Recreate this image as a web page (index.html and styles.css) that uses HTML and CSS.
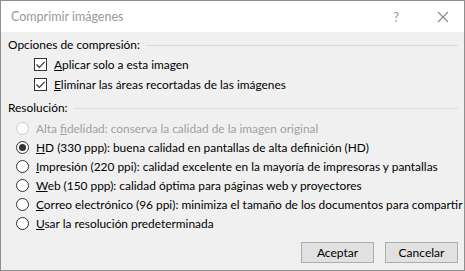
FILE: index.html
```html
<!DOCTYPE html>
<html lang="es">
<head>
    <meta charset="UTF-8">
    <title>Comprimir imágenes</title>
    <link rel="stylesheet" href="styles.css">
</head>
<body>
    <div class="dialog">
        <div class="titlebar">
            <span class="title">Comprimir imágenes</span>
            <span class="help">?</span>
            <svg class="close" width="12" height="12" viewBox="0 0 12 12">
                <path d="M1 1 L11 11 M11 1 L1 11" stroke="#8a8a8a" stroke-width="1.1" fill="none"/>
            </svg>
        </div>
        <div class="content">
            <div class="group-head">
                <span>Opciones de compresión:</span>
                <div class="rule"></div>
            </div>
            <div class="checks">
                <label class="row check-row">
                    <span class="box">
                        <svg width="11" height="11" viewBox="0 0 11 11"><path d="M1.5 5.5 L4.3 8.3 L9.7 2.8" stroke="#333" stroke-width="1.2" fill="none"/></svg>
                    </span>
                    <span><u>A</u>plicar solo a esta imagen</span>
                </label>
                <label class="row check-row">
                    <span class="box">
                        <svg width="11" height="11" viewBox="0 0 11 11"><path d="M1.5 5.5 L4.3 8.3 L9.7 2.8" stroke="#333" stroke-width="1.2" fill="none"/></svg>
                    </span>
                    <span><u>E</u>liminar las áreas recortadas de las imágenes</span>
                </label>
            </div>

            <div class="group-head res-head">
                <span>Resolución:</span>
                <div class="rule"></div>
            </div>
            <div class="radios">
                <label class="row radio-row disabled">
                    <span class="radio"></span>
                    <span>Alta <u>f</u>idelidad: conserva la calidad de la imagen original</span>
                </label>
                <label class="row radio-row">
                    <span class="radio on"></span>
                    <span><u>H</u>D (330 ppp): buena calidad en pantallas de alta definición (HD)</span>
                </label>
                <label class="row radio-row">
                    <span class="radio"></span>
                    <span><u>I</u>mpresión (220 ppi): calidad excelente en la mayoría de impresoras y pantallas</span>
                </label>
                <label class="row radio-row">
                    <span class="radio"></span>
                    <span><u>W</u>eb (150 ppp): calidad óptima para páginas web y proyectores</span>
                </label>
                <label class="row radio-row">
                    <span class="radio"></span>
                    <span><u>C</u>orreo electrónico (96 ppi): minimiza el tamaño de los documentos para compartir</span>
                </label>
                <label class="row radio-row">
                    <span class="radio"></span>
                    <span><u>U</u>sar la resolución predeterminada</span>
                </label>
            </div>

            <div class="buttons">
                <button class="btn">Aceptar</button>
                <button class="btn">Cancelar</button>
            </div>
        </div>
    </div>
</body>
</html>
```

FILE: styles.css
```css
html, body {
    margin: 0;
    padding: 0;
}
body {
    font-family: Lato, 'Noto Sans', sans-serif;
    font-size: 11.9px;
    color: #000;
    background: #f0f0f0;
}
.dialog {
    width: 463px;
    height: 269px;
    border: 1px solid #8f8f8f;
    background: #f0f0f0;
    display: flex;
    flex-direction: column;
    overflow: hidden;
}
.titlebar {
    height: 31px;
    background: #fff;
    display: flex;
    align-items: center;
    padding-left: 10px;
    padding-right: 15px;
}
.title {
    flex: 1;
    color: #999;
    font-size: 12.5px;
    padding-bottom: 1px;
}
.help {
    color: #999;
    font-size: 13px;
    margin-right: 38px;
}
.content {
    flex: 1;
    padding: 4px 6px 0 7px;
    display: flex;
    flex-direction: column;
}
.group-head {
    display: flex;
    align-items: center;
    height: 17px;
}
.group-head .rule {
    flex: 1;
    height: 1px;
    background: #dcdcdc;
    margin-left: 6px;
    margin-top: 1px;
}
.res-head {
    margin-top: 5px;
}
.row {
    display: flex;
    align-items: center;
    white-space: nowrap;
}
.checks {
    padding-left: 26px;
    padding-top: 1px;
}
.check-row {
    height: 20px;
}
.box {
    flex-shrink: 0;
    width: 11px;
    height: 11px;
    border: 1px solid #333;
    background: #fff;
    margin-right: 7px;
    display: flex;
}
.radios {
    padding-left: 8px;
    padding-top: 3px;
}
.radio-row {
    height: 19px;
}
.radio {
    flex-shrink: 0;
    width: 11px;
    height: 11px;
    border: 1px solid #333;
    border-radius: 50%;
    background: #fff;
    margin-right: 7px;
    display: flex;
    align-items: center;
    justify-content: center;
}
.radio.on::after {
    content: "";
    width: 7px;
    height: 7px;
    border-radius: 50%;
    background: #333;
}
.disabled {
    color: #a0a0a0;
}
.disabled .radio {
    border-color: #cccccc;
    background: #fcfcfc;
}
.buttons {
    display: flex;
    justify-content: flex-end;
    gap: 11px;
    margin-top: 9px;
}
.btn {
    width: 73px;
    height: 21px;
    border: 1px solid #adadad;
    background: #e1e1e1;
    font-family: Lato, 'Noto Sans', sans-serif;
    font-size: 12px;
    padding: 0;
    color: #000;
}
```
